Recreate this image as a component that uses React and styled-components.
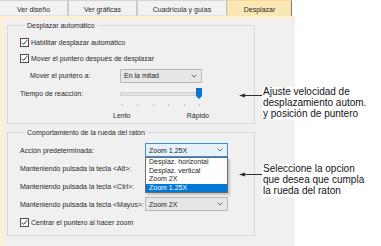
import React from 'react';
import styled, { createGlobalStyle } from 'styled-components';

const GlobalStyle = createGlobalStyle`
  html, body {
    margin: 0;
    padding: 0;
    background: #ffffff;
  }
  body {
    font-family: "Liberation Sans", Arial, sans-serif;
  }
`;

const Page = styled.div`
  position: relative;
  width: 381px;
  height: 246px;
  overflow: hidden;
  background: #ffffff;
`;

const Dialog = styled.div`
  width: 295px;
  height: 246px;
  display: flex;
  flex-direction: column;
  font-size: 7px;
  color: #2a2a2a;
`;

const TabBar = styled.div`
  display: flex;
  height: 16px;
  background: #ffffff;
`;

const Tab = styled.div`
  width: ${p => p.$w}px;
  box-sizing: border-box;
  display: flex;
  align-items: center;
  justify-content: center;
  padding-top: 2px;
  background: ${p => (p.$active ? '#fbe6b5' : '#f2f2f2')};
  border: 1px solid ${p => (p.$active ? '#f4d894' : '#d4d4d4')};
  border-right-color: ${p => (p.$active ? '#7a7a7a' : '#c4c4c4')};
  border-bottom: ${p => (p.$active ? '0' : '1px solid #e2e2e2')};
  border-left: ${p => (p.$first ? '0' : undefined)};
`;

const Panel = styled.div`
  flex: 1;
  display: flex;
  flex-direction: column;
  background: #f0f0f0;
  border-top: 3px solid #fcefd4;
  border-left: 3px solid #fcefd4;
  padding: 2px 40px 0 4px;
`;

const Group = styled.fieldset`
  margin: ${p => (p.$spaced ? '4px' : '0')} 0 0 0;
  padding: 4px 0 ${p => p.$bottom || 0}px 12px;
  min-width: 0;
  border: 1px solid #dadada;
  display: flex;
  flex-direction: column;
`;

const Legend = styled.legend`
  margin-left: 5px;
  padding: 0 2px;
  line-height: 9px;
  color: #2a2a2a;
`;

const CheckRow = styled.label`
  display: flex;
  align-items: center;
  gap: 2px;
  height: ${p => p.$h || 16}px;
`;

const FieldRow = styled.div`
  display: grid;
  grid-template-columns: ${p => p.$label}px ${p => p.$control}px;
  align-items: center;
  height: ${p => p.$h}px;
  padding-left: ${p => p.$indent || 0}px;
`;

const FieldLabel = styled.span`
  white-space: nowrap;
`;

const Combo = styled.div`
  position: relative;
  height: 14px;
  box-sizing: border-box;
  display: flex;
  align-items: center;
  justify-content: space-between;
  padding: 0 4px 0 3px;
  background: ${p => (p.$focused ? '#e5f1fb' : '#e6e6e6')};
  border: 1px solid ${p => (p.$focused ? '#3c8fd8' : '#b9b9b9')};
  color: #1e1e1e;
`;

const List = styled.ul`
  position: absolute;
  left: -1px;
  right: -1px;
  top: 13px;
  margin: 0;
  padding: 0;
  list-style: none;
  background: #ffffff;
  border: 1px solid #6b6b6b;
  box-shadow: 2px 2px 2px rgba(0, 0, 0, 0.18);
  z-index: 2;
`;

const ListItem = styled.li`
  height: 8.6px;
  line-height: 8.6px;
  padding-left: 3px;
  background: ${p => (p.$selected ? '#0078d7' : 'transparent')};
  color: ${p => (p.$selected ? '#ffffff' : '#1e1e1e')};
`;

const SliderRow = styled.div`
  display: grid;
  grid-template-columns: 100px 82px;
  padding-top: 1px;
`;

const SliderLabel = styled.span`
  height: 15px;
  display: flex;
  align-items: center;
`;

const Slider = styled.div`
  display: flex;
  flex-direction: column;
`;

const Track = styled.div`
  position: relative;
  height: 15px;
  display: flex;
  align-items: center;
  &::before {
    content: '';
    flex: 1;
    height: 2px;
    background: #e2e2e2;
    border: 1px solid #d2d2d2;
  }
`;

const Thumb = styled.svg`
  position: absolute;
  right: 0;
  top: 2px;
`;

const Ticks = styled.div`
  display: flex;
  justify-content: space-between;
  padding: 0 2px;
  height: 7px;
  align-items: center;
`;

const Tick = styled.i`
  width: 1px;
  height: 2px;
  background: #bdbdbd;
`;

const Scale = styled.div`
  display: flex;
  justify-content: space-between;
  width: 96px;
  margin-left: -7px;
  height: 15px;
  align-items: center;
`;

const Callout = styled.div`
  position: absolute;
  left: 239px;
  top: ${p => p.$top}px;
  display: flex;
  align-items: flex-start;
`;

const Arrow = styled.svg`
  margin-top: ${p => p.$drop}px;
  flex: none;
`;

const Note = styled.div`
  background: #ffffff;
  padding: 0 6px 1px 1px;
  font-size: 10px;
  line-height: 10.8px;
  color: #141414;
  white-space: nowrap;
`;

function CheckBox() {
  return (
    <svg width="9" height="9" viewBox="0 0 9 9">
      <rect x="0.5" y="0.5" width="8" height="8" fill="#ffffff" stroke="#4d4d4d" />
      <path d="M1.8 4.6 L3.6 6.4 L7.2 2.2" fill="none" stroke="#2b2b2b" strokeWidth="1" />
    </svg>
  );
}

function Chevron() {
  return (
    <svg width="6" height="4" viewBox="0 0 6 4">
      <path d="M0.5 0.5 L3 3 L5.5 0.5" fill="none" stroke="#606060" strokeWidth="0.9" />
    </svg>
  );
}

function Select({ value, focused, options, children }) {
  return (
    <Combo $focused={focused}>
      <span>{value}</span>
      <Chevron />
      {options && (
        <List>
          {options.map(o => (
            <ListItem key={o} $selected={o === value}>{o}</ListItem>
          ))}
        </List>
      )}
      {children}
    </Combo>
  );
}

function LeftArrow({ drop }) {
  return (
    <Arrow $drop={drop} width="23" height="5" viewBox="0 0 23 5">
      <polygon points="0,2.5 6,0.5 6,4.5" fill="#2e2e2e" />
      <line x1="5" y1="2.5" x2="23" y2="2.5" stroke="#2e2e2e" strokeWidth="1" />
    </Arrow>
  );
}

const tabs = [
  { label: 'Ver diseño', w: 68 },
  { label: 'Ver gráficas', w: 69 },
  { label: 'Cuadrícula y guías', w: 90 },
  { label: 'Desplazar', w: 65, active: true },
];

const wheelOptions = ['Desplaz. horizontal', 'Desplaz. vertical', 'Zoom 2X', 'Zoom 1.25X'];

export default function App() {
  return (
    <Page>
      <GlobalStyle />
      <Dialog>
        <TabBar>
          {tabs.map((t, i) => (
            <Tab key={t.label} $w={t.w} $active={t.active} $first={i === 0}>{t.label}</Tab>
          ))}
        </TabBar>
        <Panel>
          <Group>
            <Legend>Desplazar automático</Legend>
            <CheckRow><CheckBox />Habilitar desplazar automático</CheckRow>
            <CheckRow><CheckBox />Mover el puntero después de desplazar</CheckRow>
            <FieldRow $label={90} $control={82} $h={19} $indent={10}>
              <FieldLabel>Mover el puntero a:</FieldLabel>
              <Select value="En la mitad" />
            </FieldRow>
            <SliderRow>
              <SliderLabel>Tiempo de reacción:</SliderLabel>
              <Slider>
                <Track>
                  <Thumb width="6" height="11" viewBox="0 0 6 11">
                    <path d="M0 0 H6 V8 L3 11 L0 8 Z" fill="#0a74d0" />
                  </Thumb>
                </Track>
                <Ticks>
                  {[0, 1, 2, 3, 4, 5].map(i => <Tick key={i} />)}
                </Ticks>
                <Scale>
                  <span>Lento</span>
                  <span>Rápido</span>
                </Scale>
              </Slider>
            </SliderRow>
          </Group>

          <Group $spaced $bottom={4}>
            <Legend>Comportamiento de la rueda del ratón</Legend>
            <FieldRow $label={125} $control={83} $h={18}>
              <FieldLabel>Acción predeterminada:</FieldLabel>
              <Select value="Zoom 1.25X" focused options={wheelOptions} />
            </FieldRow>
            <FieldRow $label={125} $control={83} $h={18}>
              <FieldLabel>Manteniendo pulsada la tecla &lt;Alt&gt;:</FieldLabel>
            </FieldRow>
            <FieldRow $label={125} $control={83} $h={18}>
              <FieldLabel>Manteniendo pulsada la tecla &lt;Ctrl&gt;:</FieldLabel>
            </FieldRow>
            <FieldRow $label={125} $control={83} $h={18}>
              <FieldLabel>Manteniendo pulsada la tecla &lt;Mayús&gt;:</FieldLabel>
              <Select value="Zoom 2X" />
            </FieldRow>
            <CheckRow $h={18}><CheckBox />Centrar el puntero al hacer zoom</CheckRow>
          </Group>
        </Panel>
      </Dialog>

      <Callout $top={87}>
        <LeftArrow drop={6} />
        <Note>
          Ajuste velocidad de<br />
          desplazamiento autom.<br />
          y posición de puntero
        </Note>
      </Callout>

      <Callout $top={164}>
        <LeftArrow drop={8} />
        <Note>
          Seleccione la opcion<br />
          que desea que cumpla<br />
          la rueda del raton
        </Note>
      </Callout>
    </Page>
  );
}
